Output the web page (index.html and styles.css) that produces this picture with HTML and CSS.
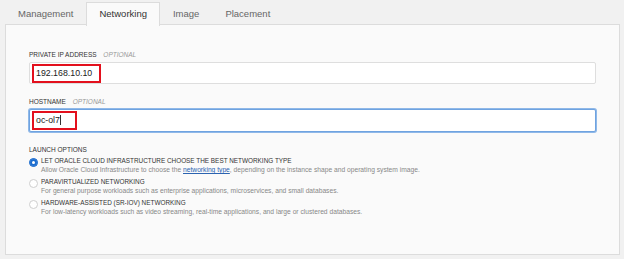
FILE: index.html
```html
<!DOCTYPE html>
<html lang="en">
<head>
    <meta charset="UTF-8">
    <title>Networking</title>
    <link rel="stylesheet" href="styles.css">
</head>
<body>
    <nav class="tabs">
        <a class="tab">Management</a>
        <a class="tab active">Networking</a>
        <a class="tab">Image</a>
        <a class="tab">Placement</a>
    </nav>

    <section class="panel">
        <div class="field">
            <label class="field-label">Private IP Address <em>Optional</em></label>
            <div class="input">
                <span class="mark mark-ip">192.168.10.10</span>
            </div>
        </div>

        <div class="field">
            <label class="field-label">Hostname <em>Optional</em></label>
            <div class="input focused">
                <span class="mark mark-host">oc-ol7<i class="caret"></i></span>
            </div>
        </div>

        <div class="options">
            <div class="field-label">Launch Options</div>

            <div class="option">
                <span class="radio checked"></span>
                <div class="option-text">
                    <div class="option-title">Let Oracle Cloud Infrastructure choose the best networking type</div>
                    <div class="option-desc">Allow Oracle Cloud Infrastructure to choose the <a href="#">networking type</a>, depending on the instance shape and operating system image.</div>
                </div>
            </div>

            <div class="option">
                <span class="radio"></span>
                <div class="option-text">
                    <div class="option-title">Paravirtualized networking</div>
                    <div class="option-desc">For general purpose workloads such as enterprise applications, microservices, and small databases.</div>
                </div>
            </div>

            <div class="option">
                <span class="radio"></span>
                <div class="option-text">
                    <div class="option-title">Hardware-assisted (SR-IOV) networking</div>
                    <div class="option-desc">For low-latency workloads such as video streaming, real-time applications, and large or clustered databases.</div>
                </div>
            </div>
        </div>
    </section>
</body>
</html>
```

FILE: styles.css
```css
body {
    margin: 0;
    padding: 0 4px 0 5px;
    background: #f1f1f1;
    font-family: "Liberation Sans", Arial, sans-serif;
    color: #333;
}
.tabs {
    display: flex;
    padding-top: 2px;
    height: 22px;
}
.tab {
    padding: 0 12px;
    line-height: 22px;
    font-size: 9.5px;
    color: #666;
    border: 1px solid transparent;
    border-bottom: none;
}
.tab.active {
    background: #fafafa;
    border-color: #dcdcdc;
    color: #333;
    height: 23px;
    position: relative;
    z-index: 1;
}
.panel {
    background: #fafafa;
    border: 1px solid #dcdcdc;
    height: 204px;
    padding: 25px 23px 0;
}
.field {
    margin-bottom: 13px;
}
.field-label {
    display: block;
    font-size: 6.5px;
    line-height: 9px;
    text-transform: uppercase;
    color: #333;
    margin-bottom: 3px;
}
.field-label em {
    color: #999;
    margin-left: 5px;
}
.input {
    height: 20px;
    background: #fff;
    border: 1px solid #dedede;
    border-radius: 2px;
    padding: 0 2px;
    display: flex;
    align-items: center;
}
.input.focused {
    height: 21px;
    border-color: #6fa3e0;
    box-shadow: 0 0 0 1px #8fb8e8;
}
.mark {
    display: inline-block;
    box-sizing: border-box;
    height: 19px;
    border: 2px solid #e3101d;
    padding: 0 2px;
    font-size: 8.8px;
    line-height: 15px;
    color: #222;
}
.mark-ip {
    width: 69px;
}
.mark-host {
    width: 45px;
}
.caret {
    display: inline-block;
    width: 1px;
    height: 10px;
    background: #333;
    vertical-align: -2px;
}
.options .field-label {
    margin-bottom: 2px;
}
.option {
    display: flex;
    margin-bottom: 3px;
}
.radio {
    flex: none;
    box-sizing: border-box;
    width: 9px;
    height: 9px;
    margin: 2px 3px 0 0;
    border: 1px solid #cfcfcf;
    border-radius: 50%;
    background: #fff;
}
.radio.checked {
    background: #1c6dcf;
    border-color: #1c6dcf;
    box-shadow: inset 0 0 0 2px #1c6dcf, inset 0 0 0 4px #fff;
}
.option-title {
    font-size: 6.4px;
    line-height: 9px;
    text-transform: uppercase;
    color: #333;
}
.option-desc {
    font-size: 6.7px;
    line-height: 9px;
    color: #888;
}
.option-desc a {
    color: #2b63b0;
}
```
